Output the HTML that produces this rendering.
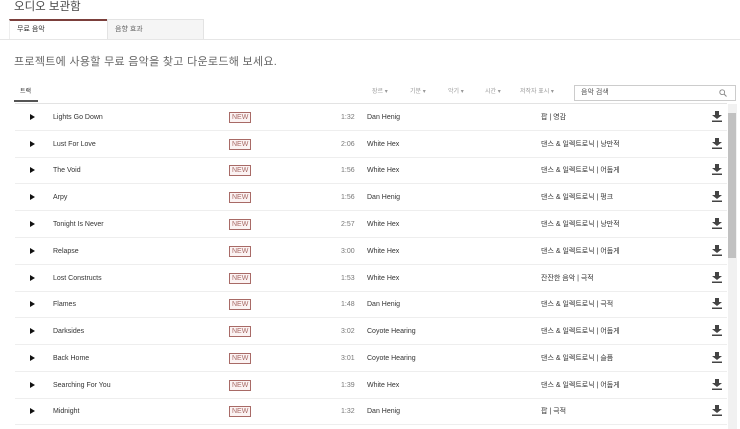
<!DOCTYPE html>
<html><head><meta charset="utf-8"><style>
*{margin:0;padding:0;box-sizing:border-box}
body{width:740px;height:429px;overflow:hidden;background:#fff;font-family:"Liberation Sans","Noto Sans CJK KR",sans-serif;color:#333;position:relative}
.a{position:absolute;white-space:nowrap;line-height:1}
.row{position:absolute;left:15px;width:712px;height:27px;border-bottom:1px solid #eee;font-size:7px;color:#333}
.row span{position:absolute;top:10px;line-height:8px;height:8px}
.row span.new{left:214px;top:8px;height:11px;border:1px solid #a86a66;color:#a86a66;font-size:7px;padding:0 2px;line-height:9px;background:#fbf3f3}
.dl{position:absolute;left:697px;top:7px}
.play{position:absolute;left:15px;top:10px;width:0;height:0;border-left:5px solid #111;border-top:3.5px solid transparent;border-bottom:3.5px solid transparent}
.f{font-size:6px;color:#999;top:89px}
</style></head><body>
<div class="a" style="left:14px;top:2px;font-size:11.5px;color:#444">오디오 보관함</div>
<div class="a" style="left:9px;top:19px;width:98px;height:21px;border-top:2px solid #7b3f3b;background:#fff;border-left:1px solid #eee"></div>
<div class="a" style="left:17px;top:26px;font-size:7px;color:#333">무료 음악</div>
<div class="a" style="left:107px;top:19px;width:97px;height:21px;background:#f5f5f5;border:1px solid #e3e3e3;border-bottom:none"></div>
<div class="a" style="left:115px;top:26px;font-size:7px;color:#666">음향 효과</div>
<div class="a" style="left:0;top:39px;width:740px;height:1px;background:#e6e6e6"></div>
<div class="a" style="left:14px;top:57px;font-size:11px;color:#666;letter-spacing:0.3px">프로젝트에 사용할 무료 음악을 찾고 다운로드해 보세요.</div>
<div class="a" style="left:20px;top:89px;font-size:6px;color:#333">트랙</div>
<div class="a" style="left:14px;top:100px;width:24px;height:2px;background:#555"></div>
<div class="a" style="left:15px;top:103px;width:712px;height:1px;background:#e3e3e3"></div>
<div class="a f" style="left:372px">장르 ▾</div>
<div class="a f" style="left:410px">기분 ▾</div>
<div class="a f" style="left:448px">악기 ▾</div>
<div class="a f" style="left:485px">시간 ▾</div>
<div class="a f" style="left:520px">저작자 표시 ▾</div>
<div class="a" style="left:574px;top:85px;width:162px;height:16px;border:1px solid #ccc"></div>
<div class="a" style="left:581px;top:89px;font-size:7px;color:#555">음악 검색</div>
<svg class="a" style="left:719px;top:89px" width="8" height="8" viewBox="0 0 8 8"><circle cx="3.2" cy="3.2" r="2.4" fill="none" stroke="#888" stroke-width="0.9"/><line x1="5" y1="5" x2="7.5" y2="7.5" stroke="#888" stroke-width="1"/></svg>
<div class="a" style="left:728px;top:104px;width:9px;height:325px;background:#f1f1f1"></div>
<div class="a" style="left:728px;top:113px;width:8px;height:145px;background:#c1c1c1"></div>

<div class="row" style="top:104px"><div class="play"></div><span style="left:38px">Lights Go Down</span><span class="new">NEW</span><span style="left:326px;color:#777">1:32</span><span style="left:352px">Dan Henig</span><span style="left:526px">팝 | 영감</span><svg class="dl" width="10" height="11" viewBox="0 0 10 11"><path d="M3 0h4v4h3L5 8 0 4h3z M0 9.5h10V11H0z" fill="#444"/></svg></div>
<div class="row" style="top:131px"><div class="play"></div><span style="left:38px">Lust For Love</span><span class="new">NEW</span><span style="left:326px;color:#777">2:06</span><span style="left:352px">White Hex</span><span style="left:526px">댄스 &amp; 일렉트로닉 | 낭만적</span><svg class="dl" width="10" height="11" viewBox="0 0 10 11"><path d="M3 0h4v4h3L5 8 0 4h3z M0 9.5h10V11H0z" fill="#444"/></svg></div>
<div class="row" style="top:157px"><div class="play"></div><span style="left:38px">The Void</span><span class="new">NEW</span><span style="left:326px;color:#777">1:56</span><span style="left:352px">White Hex</span><span style="left:526px">댄스 &amp; 일렉트로닉 | 어둡게</span><svg class="dl" width="10" height="11" viewBox="0 0 10 11"><path d="M3 0h4v4h3L5 8 0 4h3z M0 9.5h10V11H0z" fill="#444"/></svg></div>
<div class="row" style="top:184px"><div class="play"></div><span style="left:38px">Arpy</span><span class="new">NEW</span><span style="left:326px;color:#777">1:56</span><span style="left:352px">Dan Henig</span><span style="left:526px">댄스 &amp; 일렉트로닉 | 펑크</span><svg class="dl" width="10" height="11" viewBox="0 0 10 11"><path d="M3 0h4v4h3L5 8 0 4h3z M0 9.5h10V11H0z" fill="#444"/></svg></div>
<div class="row" style="top:211px"><div class="play"></div><span style="left:38px">Tonight Is Never</span><span class="new">NEW</span><span style="left:326px;color:#777">2:57</span><span style="left:352px">White Hex</span><span style="left:526px">댄스 &amp; 일렉트로닉 | 낭만적</span><svg class="dl" width="10" height="11" viewBox="0 0 10 11"><path d="M3 0h4v4h3L5 8 0 4h3z M0 9.5h10V11H0z" fill="#444"/></svg></div>
<div class="row" style="top:238px"><div class="play"></div><span style="left:38px">Relapse</span><span class="new">NEW</span><span style="left:326px;color:#777">3:00</span><span style="left:352px">White Hex</span><span style="left:526px">댄스 &amp; 일렉트로닉 | 어둡게</span><svg class="dl" width="10" height="11" viewBox="0 0 10 11"><path d="M3 0h4v4h3L5 8 0 4h3z M0 9.5h10V11H0z" fill="#444"/></svg></div>
<div class="row" style="top:265px"><div class="play"></div><span style="left:38px">Lost Constructs</span><span class="new">NEW</span><span style="left:326px;color:#777">1:53</span><span style="left:352px">White Hex</span><span style="left:526px">잔잔한 음악 | 극적</span><svg class="dl" width="10" height="11" viewBox="0 0 10 11"><path d="M3 0h4v4h3L5 8 0 4h3z M0 9.5h10V11H0z" fill="#444"/></svg></div>
<div class="row" style="top:291px"><div class="play"></div><span style="left:38px">Flames</span><span class="new">NEW</span><span style="left:326px;color:#777">1:48</span><span style="left:352px">Dan Henig</span><span style="left:526px">댄스 &amp; 일렉트로닉 | 극적</span><svg class="dl" width="10" height="11" viewBox="0 0 10 11"><path d="M3 0h4v4h3L5 8 0 4h3z M0 9.5h10V11H0z" fill="#444"/></svg></div>
<div class="row" style="top:318px"><div class="play"></div><span style="left:38px">Darksides</span><span class="new">NEW</span><span style="left:326px;color:#777">3:02</span><span style="left:352px">Coyote Hearing</span><span style="left:526px">댄스 &amp; 일렉트로닉 | 어둡게</span><svg class="dl" width="10" height="11" viewBox="0 0 10 11"><path d="M3 0h4v4h3L5 8 0 4h3z M0 9.5h10V11H0z" fill="#444"/></svg></div>
<div class="row" style="top:345px"><div class="play"></div><span style="left:38px">Back Home</span><span class="new">NEW</span><span style="left:326px;color:#777">3:01</span><span style="left:352px">Coyote Hearing</span><span style="left:526px">댄스 &amp; 일렉트로닉 | 슬픔</span><svg class="dl" width="10" height="11" viewBox="0 0 10 11"><path d="M3 0h4v4h3L5 8 0 4h3z M0 9.5h10V11H0z" fill="#444"/></svg></div>
<div class="row" style="top:372px"><div class="play"></div><span style="left:38px">Searching For You</span><span class="new">NEW</span><span style="left:326px;color:#777">1:39</span><span style="left:352px">White Hex</span><span style="left:526px">댄스 &amp; 일렉트로닉 | 어둡게</span><svg class="dl" width="10" height="11" viewBox="0 0 10 11"><path d="M3 0h4v4h3L5 8 0 4h3z M0 9.5h10V11H0z" fill="#444"/></svg></div>
<div class="row" style="top:398px"><div class="play"></div><span style="left:38px">Midnight</span><span class="new">NEW</span><span style="left:326px;color:#777">1:32</span><span style="left:352px">Dan Henig</span><span style="left:526px">팝 | 극적</span><svg class="dl" width="10" height="11" viewBox="0 0 10 11"><path d="M3 0h4v4h3L5 8 0 4h3z M0 9.5h10V11H0z" fill="#444"/></svg></div>
</body></html>
